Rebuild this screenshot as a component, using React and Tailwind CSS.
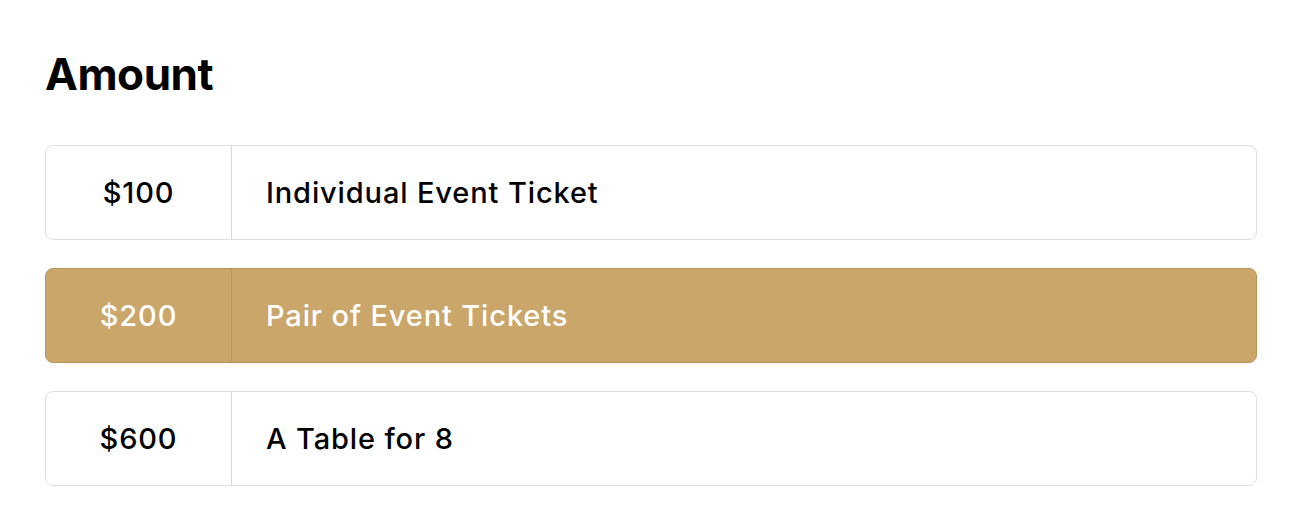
const options = [
  { amount: '$100', label: 'Individual Event Ticket' },
  { amount: '$200', label: 'Pair of Event Tickets', selected: true },
  { amount: '$600', label: 'A Table for 8' },
];

export default function App() {
  return (
    <div className="min-h-screen bg-white pl-[45px] pr-[53px] pt-[48px] font-['Inter',sans-serif] text-black">
      <h2 className="text-[44px] font-bold leading-[52px] tracking-[-0.01em]">Amount</h2>
      <div className="mt-[45px] flex flex-col gap-[28px]">
        {options.map((o) => (
          <button
            key={o.amount}
            className={
              o.selected
                ? 'flex h-[95px] w-full items-stretch rounded-[8px] border-[1.5px] border-[#b8955a] bg-[#caa66b] text-left text-white'
                : 'flex h-[95px] w-full items-stretch rounded-[8px] border-[1.5px] border-[#e0e0e0] bg-white text-left text-black'
            }
          >
            <span
              className={
                o.selected
                  ? 'flex w-[186px] shrink-0 items-center justify-center border-r border-[#b8955a] text-[29px] font-medium tracking-[0.03em]'
                  : 'flex w-[186px] shrink-0 items-center justify-center border-r border-[#d9d9d9] text-[29px] font-medium tracking-[0.03em]'
              }
            >
              {o.amount}
            </span>
            <span className="flex items-center pl-[34px] text-[29px] font-medium tracking-[0.03em]">{o.label}</span>
          </button>
        ))}
      </div>
    </div>
  );
}
